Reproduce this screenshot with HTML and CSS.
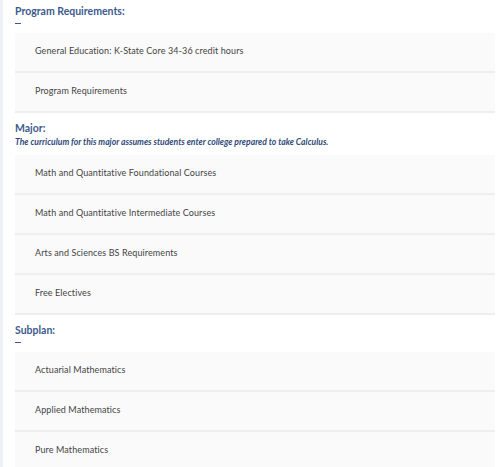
FILE: index.html
```html
<!DOCTYPE html>
<html lang="en">
<head>
    <meta charset="UTF-8">
    <meta name="viewport" content="width=device-width, initial-scale=1.0">
    <title>Program Requirements</title>
    <link rel="stylesheet" href="styles.css">
</head>
<body>

<div class="page">
    <!-- Program Requirements -->
    <div class="group">
        <h3>Program Requirements:</h3>
        <div class="dash"></div>
        <ul class="rows">
            <li>General Education: K-State Core 34-36 credit hours</li>
            <li>Program Requirements</li>
        </ul>
    </div>

    <!-- Major -->
    <div class="group">
        <h3>Major:</h3>
        <p class="note">The curriculum for this major assumes students enter college prepared to take Calculus.</p>
        <ul class="rows">
            <li>Math and Quantitative Foundational Courses</li>
            <li>Math and Quantitative Intermediate Courses</li>
            <li>Arts and Sciences BS Requirements</li>
            <li>Free Electives</li>
        </ul>
    </div>

    <!-- Subplan -->
    <div class="group">
        <h3>Subplan:</h3>
        <div class="dash"></div>
        <ul class="rows">
            <li>Actuarial Mathematics</li>
            <li>Applied Mathematics</li>
            <li>Pure Mathematics</li>
        </ul>
    </div>
</div>

</body>
</html>
```

FILE: styles.css
```css
body {
    font-family: Lato, "Open Sans", Arial, sans-serif;
    font-variant-ligatures: none;
    background-color: #ffffff;
    margin: 0;
    padding: 0;
}
.page {
    border-left: 3px solid #eef2f8;
    padding: 4px 1px 0 12px;
}
.group {
    margin-bottom: 8px;
}
.group h3 {
    color: #3d5a8c;
    font-size: 10.5px;
    font-weight: bold;
    margin: 0;
    line-height: 14px;
}
/* short collapse marker under a heading */
.dash {
    width: 6px;
    height: 1px;
    background-color: #3d5a8c;
    margin: 5px 0 9px 0;
}
.note {
    color: #2f4a7a;
    font-size: 8.6px;
    font-weight: bold;
    font-style: italic;
    margin: 0 0 6px 0;
    line-height: 14px;
}
.rows {
    list-style: none;
    margin: 0;
    padding: 0;
}
.rows li {
    background-color: #fafafa;
    border-bottom: 2px solid #eeeeee;
    color: #444444;
    font-size: 9px;
    letter-spacing: 0.1px;
    height: 38px;
    line-height: 36px;
    padding-left: 20px;
}
```
